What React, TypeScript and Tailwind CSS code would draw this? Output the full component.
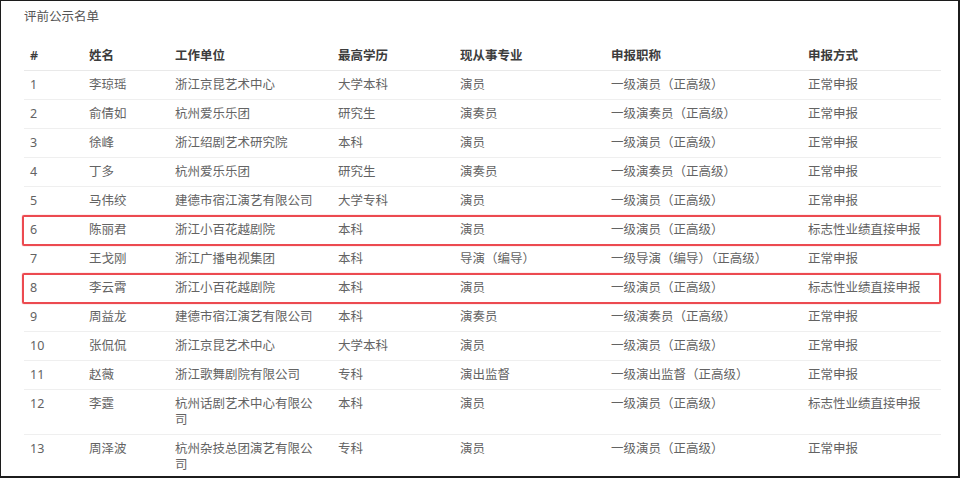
const rows: [string, string, string, string, string, string, string, boolean?][] = [
  ['1', '李琼瑶', '浙江京昆艺术中心', '大学本科', '演员', '一级演员（正高级）', '正常申报'],
  ['2', '俞倩如', '杭州爱乐乐团', '研究生', '演奏员', '一级演奏员（正高级）', '正常申报'],
  ['3', '徐峰', '浙江绍剧艺术研究院', '本科', '演员', '一级演员（正高级）', '正常申报'],
  ['4', '丁多', '杭州爱乐乐团', '研究生', '演奏员', '一级演奏员（正高级）', '正常申报'],
  ['5', '马伟绞', '建德市宿江演艺有限公司', '大学专科', '演员', '一级演员（正高级）', '正常申报'],
  ['6', '陈丽君', '浙江小百花越剧院', '本科', '演员', '一级演员（正高级）', '标志性业绩直接申报', true],
  ['7', '王戈刚', '浙江广播电视集团', '本科', '导演（编导）', '一级导演（编导）（正高级）', '正常申报'],
  ['8', '李云霄', '浙江小百花越剧院', '本科', '演员', '一级演员（正高级）', '标志性业绩直接申报', true],
  ['9', '周益龙', '建德市宿江演艺有限公司', '本科', '演奏员', '一级演奏员（正高级）', '正常申报'],
  ['10', '张侃侃', '浙江京昆艺术中心', '大学本科', '演员', '一级演员（正高级）', '正常申报'],
  ['11', '赵薇', '浙江歌舞剧院有限公司', '专科', '演出监督', '一级演出监督（正高级）', '正常申报'],
  ['12', '李霆', '杭州话剧艺术中心有限公司', '本科', '演员', '一级演员（正高级）', '标志性业绩直接申报'],
  ['13', '周泽波', '杭州杂技总团演艺有限公司', '专科', '演员', '一级演员（正高级）', '正常申报'],
];

const headers = ['#', '姓名', '工作单位', '最高学历', '现从事专业', '申报职称', '申报方式'];
const widths = ['w-[59px]', 'w-[86px]', 'w-[163px]', 'w-[122px]', 'w-[151px]', 'w-[197px]', 'w-[139px]'];

export default function App() {
  return (
    <div className="w-[960px] h-[478px] overflow-hidden bg-white border-t border-l border-r-2 border-b-2 border-[#1c1c1c] font-['Noto_Sans','Noto_Sans_CJK_SC',sans-serif] text-[12.5px] leading-[16px]">
      <div className="pl-[23px] pt-[8px] text-[#555]">评前公示名单</div>
      <table className="ml-[23px] mt-[17px] w-[917px] table-fixed border-collapse">
        <colgroup>
          {widths.map((w, i) => (
            <col key={i} className={w} />
          ))}
        </colgroup>
        <thead>
          <tr className="border-b border-[#e9e9e9]">
            {headers.map((h) => (
              <th key={h} className="pl-[6px] pr-[10px] py-[6px] text-left font-semibold text-[#3c3c3c]">
                {h}
              </th>
            ))}
          </tr>
        </thead>
        <tbody>
          {rows.map((r) => (
            <tr key={r[0]} className="relative border-b border-[#efefef] text-[#636363]">
              {r.slice(0, 7).map((c, i) => (
                <td key={i} className="relative pl-[6px] pr-[12px] py-[6px] align-top">
                  {c}
                  {i === 0 && r[7] && (
                    <div className="absolute left-[-2px] top-[-1px] w-[919px] h-[31px] border-2 border-[#ec4a50] rounded-[2px] shadow-[0_0_1px_#ec4a50] pointer-events-none" />
                  )}
                </td>
              ))}
            </tr>
          ))}
        </tbody>
      </table>
    </div>
  );
}
